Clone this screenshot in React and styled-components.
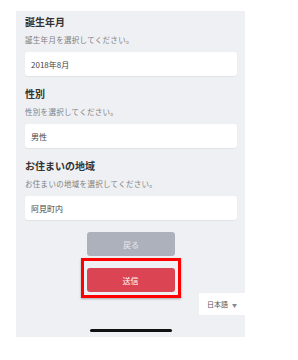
import React from "react";
import styled, { createGlobalStyle } from "styled-components";

const GlobalStyle = createGlobalStyle`
  body {
    margin: 0;
    background: #ffffff;
    font-family: "Noto Sans CJK JP", "Noto Sans", sans-serif;
  }
`;

const Panel = styled.div`
  position: relative;
  margin: 11px 0 0 16px;
  width: 229px;
  height: 326px;
  background: #eff0f4;
  padding: 4px 8px 0 9px;
  box-sizing: border-box;
  display: flex;
  flex-direction: column;
  gap: 11px;
`;

const Section = styled.div`
  display: flex;
  flex-direction: column;
`;

const Title = styled.div`
  font-size: 10px;
  line-height: 14px;
  font-weight: 700;
  color: #333;
`;

const Hint = styled.div`
  margin-top: 5px;
  font-size: 7.5px;
  line-height: 12px;
  color: #808080;
  letter-spacing: 0.3px;
`;

const Field = styled.div`
  margin-top: 6px;
  height: 24px;
  background: #fff;
  border-radius: 3px;
  box-shadow: 0 1px 1px rgba(0, 0, 0, 0.06);
  display: flex;
  align-items: center;
  padding-left: 6px;
  font-size: 8px;
  color: #444;
`;

const Actions = styled.div`
  margin-top: 1px;
  display: flex;
  flex-direction: column;
  align-items: center;
`;

const Button = styled.div`
  width: 88px;
  height: 24px;
  border-radius: 3px;
  background: ${({ variant }) => (variant === "send" ? "#da4453" : "#adb1bc")};
  color: ${({ variant }) => (variant === "send" ? "#fff" : "#e6e8ee")};
  font-size: 8px;
  display: flex;
  align-items: center;
  justify-content: center;
`;

const Highlight = styled.div`
  margin-top: 2px;
  margin-right: 1px;
  border: 3px solid #f00;
  padding: 7px 3px 3px 3px;
  box-shadow: 0 1px 2px rgba(0, 0, 0, 0.3);
`;

const Lang = styled.div`
  position: absolute;
  right: 0;
  top: 282px;
  width: 46px;
  height: 22px;
  background: #fff;
  display: flex;
  align-items: center;
  justify-content: center;
  gap: 4px;
  font-size: 7px;
  color: #555;
`;

const Caret = styled.span`
  font-size: 5px;
  color: #888;
`;

const HomeBar = styled.div`
  position: absolute;
  left: 74px;
  top: 318px;
  width: 82px;
  height: 3px;
  border-radius: 2px;
  background: #111;
`;

const fields = [
  { title: "誕生年月", hint: "誕生年月を選択してください。", value: "2018年8月" },
  { title: "性別", hint: "性別を選択してください。", value: "男性" },
  { title: "お住まいの地域", hint: "お住まいの地域を選択してください。", value: "阿見町内" },
];

export default function App() {
  return (
    <>
      <GlobalStyle />
      <Panel>
        {fields.map((f) => (
          <Section key={f.title}>
            <Title>{f.title}</Title>
            <Hint>{f.hint}</Hint>
            <Field>{f.value}</Field>
          </Section>
        ))}
        <Actions>
          <Button>戻る</Button>
          <Highlight>
            <Button variant="send">送信</Button>
          </Highlight>
        </Actions>
        <Lang>
          日本語 <Caret>▼</Caret>
        </Lang>
        <HomeBar />
      </Panel>
    </>
  );
}
